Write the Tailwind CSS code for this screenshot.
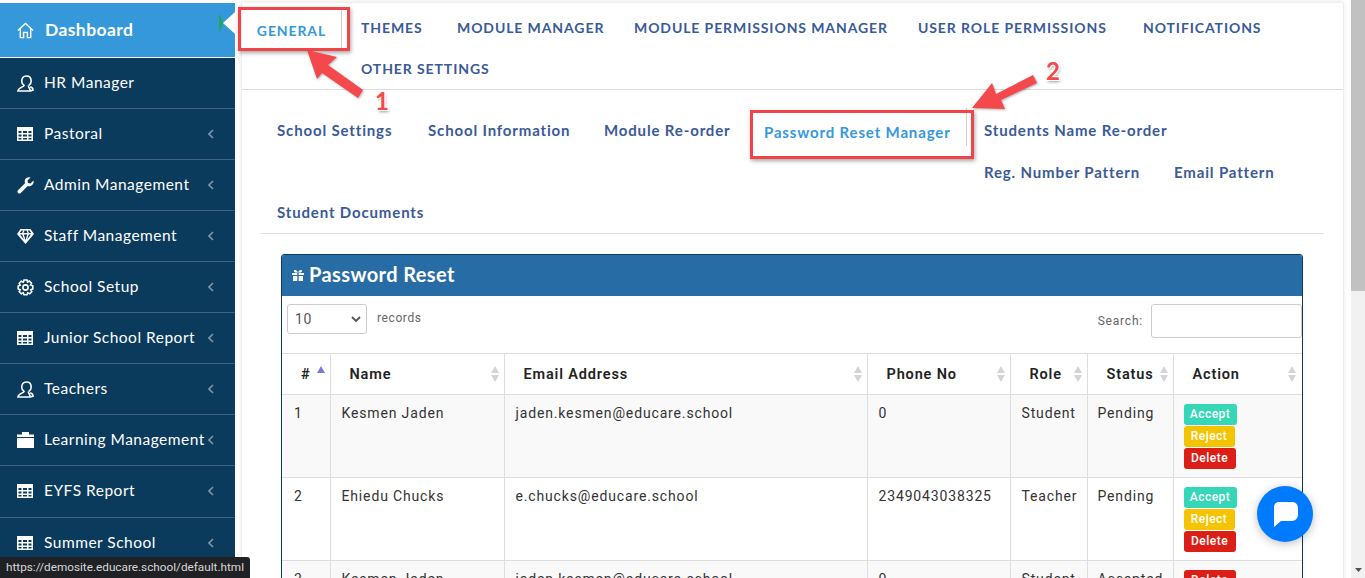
<!doctype html>
<html><head><meta charset="utf-8"><script src="https://cdn.jsdelivr.net/npm/@tailwindcss/browser@4"></script></head>
<body class="m-0 bg-white">
<div class="relative flex h-[578px] w-[1365px] overflow-hidden bg-white font-['Lato',sans-serif]">
  <aside class="flex h-full w-[235px] shrink-0 flex-col bg-white pt-[3px] text-white">
    <a class="flex h-[55px] shrink-0 items-center border-b border-white bg-[#3498db] pl-[17px] text-[17.500px] font-bold tracking-[0.4px]">
      <svg class="mr-[11px] h-[17px] w-[17px]" viewBox="0 0 18 18" fill="none" stroke="white" stroke-width="1.500"><path d="M1 9 9 1.500 17 9M3.500 7.500V16.500H7V11H11V16.500H14.500V7.500"/></svg>Dashboard
    </a>
    <div class="flex flex-1 flex-col bg-[#0a3a5c] text-[15.5px] tracking-[0.5px]">
      <a class="flex h-[51px] shrink-0 items-center border-b border-[#3f6380] pl-[17px]"><svg class="mr-[10px] h-[17px] w-[17px]" viewBox="0 0 18 18" fill="none" stroke="white" stroke-width="1.700"><path d="M5 6.500C5 3 7 1 10 1s5 2 5 5.500c0 2-1 3.500-2.500 4.500M5 6.500C5 8.500 6 10 7.500 11 7 13 1.500 13 1 17H14C14 14.500 12 13 12 11M14 12.500c1.500.5 3 1.500 3 3.500L14 17"/></svg>HR Manager</a>
      <a class="flex h-[51px] shrink-0 items-center border-b border-[#3f6380] pl-[17px]"><svg class="mr-[11px] h-[14px] w-[16px]" viewBox="0 0 16 14" fill="white"><path fill-rule="evenodd" d="M0 0H16V14H0ZM1.500 4V6H4.500V4ZM6 4V6H10V4ZM11.500 4V6H14.500V4ZM1.500 7.500V9.500H4.500V7.500ZM6 7.500V9.500H10V7.500ZM11.500 7.500V9.500H14.500V7.500ZM1.500 11V12.500H4.500V11ZM6 11V12.500H10V11ZM11.500 11V12.500H14.500V11Z"/></svg><span class="flex-1">Pastoral</span><svg class="mr-[21px] h-[10px] w-[6px]" viewBox="0 0 6 10" fill="none" stroke="#7f97ab" stroke-width="1.600"><path d="M5 1 1 5l4 4"/></svg></a>
      <a class="flex h-[51px] shrink-0 items-center border-b border-[#3f6380] pl-[17px]"><svg class="mr-[10px] h-[17px] w-[17px]" viewBox="0 0 17 17" fill="white"><path d="M16.500 3.500 13.500 6.500 11 6 10.500 3.500 13.500.5C11-.5 8 1 7.800 3.800 7.700 5 8 5.700 8 6.300L.8 13.500C-.5 15 2 17.500 3.500 16.200L10.700 9C13.500 10 17.500 7.500 16.500 3.500Z"/></svg><span class="flex-1">Admin Management</span><svg class="mr-[21px] h-[10px] w-[6px]" viewBox="0 0 6 10" fill="none" stroke="#7f97ab" stroke-width="1.600"><path d="M5 1 1 5l4 4"/></svg></a>
      <a class="flex h-[51px] shrink-0 items-center border-b border-[#3f6380] pl-[17px]"><svg class="mr-[10px] h-[15px] w-[17px]" viewBox="0 0 17 15" fill="white"><path fill-rule="evenodd" d="M3.500 0H13.500L17 5 8.500 15 0 5ZM4.500 1.500 2.800 4H5L6.200 1.500ZM7.500 1.500 6.500 4H10.500L9.500 1.500ZM10.800 1.500 12 4H14.200L12.500 1.500ZM3 5.500 7 10.500 5.200 5.500ZM6.800 5.500 8.500 11 10.200 5.500ZM11.800 5.500 10 10.500 14 5.500Z"/></svg><span class="flex-1">Staff Management</span><svg class="mr-[21px] h-[10px] w-[6px]" viewBox="0 0 6 10" fill="none" stroke="#7f97ab" stroke-width="1.600"><path d="M5 1 1 5l4 4"/></svg></a>
      <a class="flex h-[51px] shrink-0 items-center border-b border-[#3f6380] pl-[17px]"><svg class="mr-[10px] h-[17px] w-[17px]" viewBox="0 0 17 17" fill="none" stroke="white" stroke-width="1.600"><circle cx="8.500" cy="8.500" r="2.600"/><path d="M7 1H10L10.500 3 12.300 2 14.500 4.200 13.500 6 15.800 6.800V10L13.800 10.700 14.800 12.700 12.700 14.800 10.700 13.800 10 15.800H7L6.300 13.800 4.300 14.800 2.200 12.700 3.200 10.700 1.200 10V7L3.200 6.300 2.200 4.300 4.300 2.200 6.300 3.200Z"/></svg><span class="flex-1">School Setup</span><svg class="mr-[21px] h-[10px] w-[6px]" viewBox="0 0 6 10" fill="none" stroke="#7f97ab" stroke-width="1.600"><path d="M5 1 1 5l4 4"/></svg></a>
      <a class="flex h-[51px] shrink-0 items-center border-b border-[#3f6380] pl-[17px]"><svg class="mr-[11px] h-[14px] w-[16px]" viewBox="0 0 16 14" fill="white"><path fill-rule="evenodd" d="M0 0H16V14H0ZM1.500 4V6H4.500V4ZM6 4V6H10V4ZM11.500 4V6H14.500V4ZM1.500 7.500V9.500H4.500V7.500ZM6 7.500V9.500H10V7.500ZM11.500 7.500V9.500H14.500V7.500ZM1.500 11V12.500H4.500V11ZM6 11V12.500H10V11ZM11.500 11V12.500H14.500V11Z"/></svg><span class="flex-1">Junior School Report</span><svg class="mr-[21px] h-[10px] w-[6px]" viewBox="0 0 6 10" fill="none" stroke="#7f97ab" stroke-width="1.600"><path d="M5 1 1 5l4 4"/></svg></a>
      <a class="flex h-[51px] shrink-0 items-center border-b border-[#3f6380] pl-[17px]"><svg class="mr-[10px] h-[17px] w-[17px]" viewBox="0 0 18 18" fill="none" stroke="white" stroke-width="1.700"><path d="M5 6.500C5 3 7 1 10 1s5 2 5 5.500c0 2-1 3.500-2.500 4.500M5 6.500C5 8.500 6 10 7.500 11 7 13 1.500 13 1 17H14C14 14.500 12 13 12 11M14 12.500c1.500.5 3 1.500 3 3.500L14 17"/></svg><span class="flex-1">Teachers</span><svg class="mr-[21px] h-[10px] w-[6px]" viewBox="0 0 6 10" fill="none" stroke="#7f97ab" stroke-width="1.600"><path d="M5 1 1 5l4 4"/></svg></a>
      <a class="flex h-[51px] shrink-0 items-center border-b border-[#3f6380] pl-[17px]"><svg class="mr-[10px] h-[16px] w-[17px]" viewBox="0 0 17 16" fill="white"><path d="M5 0H12V2.500H17V5H0V2.500H5ZM0 6H17V16H0Z"/></svg><span class="w-[164px] whitespace-nowrap">Learning Management</span><svg class="h-[10px] w-[6px]" viewBox="0 0 6 10" fill="none" stroke="#7f97ab" stroke-width="1.600"><path d="M5 1 1 5l4 4"/></svg></a>
      <a class="flex h-[52px] shrink-0 items-center border-b border-[#3f6380] pb-[2px] pl-[17px]"><svg class="mr-[11px] h-[14px] w-[16px]" viewBox="0 0 16 14" fill="white"><path fill-rule="evenodd" d="M0 0H16V14H0ZM1.500 4V6H4.500V4ZM6 4V6H10V4ZM11.500 4V6H14.500V4ZM1.500 7.500V9.500H4.500V7.500ZM6 7.500V9.500H10V7.500ZM11.500 7.500V9.500H14.500V7.500ZM1.500 11V12.500H4.500V11ZM6 11V12.500H10V11ZM11.500 11V12.500H14.500V11Z"/></svg><span class="flex-1">EYFS Report</span><svg class="mr-[21px] h-[10px] w-[6px]" viewBox="0 0 6 10" fill="none" stroke="#7f97ab" stroke-width="1.600"><path d="M5 1 1 5l4 4"/></svg></a>
      <a class="flex h-[51px] shrink-0 items-center pb-[2px] pl-[17px]"><svg class="mr-[11px] h-[14px] w-[16px]" viewBox="0 0 16 14" fill="white"><path fill-rule="evenodd" d="M0 0H16V14H0ZM1.500 4V6H4.500V4ZM6 4V6H10V4ZM11.500 4V6H14.500V4ZM1.500 7.500V9.500H4.500V7.500ZM6 7.500V9.500H10V7.500ZM11.500 7.500V9.500H14.500V7.500ZM1.500 11V12.500H4.500V11ZM6 11V12.500H10V11ZM11.500 11V12.500H14.500V11Z"/></svg><span class="flex-1">Summer School</span><svg class="mr-[21px] h-[10px] w-[6px]" viewBox="0 0 6 10" fill="none" stroke="#7f97ab" stroke-width="1.600"><path d="M5 1 1 5l4 4"/></svg></a>
    </div>
  </aside>

  <main class="h-full w-[1116px] shrink-0 pt-[3px] pl-[6px] pr-[7px]">
    <div class="h-[640px] border-x border-[#e8eef3] shadow-[0_-2px_4px_rgba(0,0,0,0.08)]">
      <div class="flex h-[87px] border-b border-[#dddddd] text-[14px] font-bold uppercase tracking-[0.9px] text-[#3a5a98]">
        <div class="mt-[5px] flex h-[42px] w-[100px] shrink-0 items-center justify-center border-r border-[#cfcfcf] pt-[2px] text-[#3498db]">General</div>
        <div class="flex flex-1 flex-wrap content-start pt-[14px] pl-[19px]">
          <a class="h-[20px] w-[96px] whitespace-nowrap">Themes</a>
          <a class="h-[20px] w-[177px] whitespace-nowrap">Module Manager</a>
          <a class="h-[20px] w-[284px] whitespace-nowrap">Module Permissions Manager</a>
          <a class="h-[20px] w-[225px] whitespace-nowrap">User Role Permissions</a>
          <a class="h-[20px] w-[140px] whitespace-nowrap">Notifications</a>
          <a class="mt-[21px] h-[20px] w-[200px] whitespace-nowrap">Other Settings</a>
        </div>
      </div>
      <div class="mx-[19px] flex h-[144px] flex-col border-b border-[#dddddd] text-[15px] font-bold tracking-[0.85px] text-[#3a5a98]">
        <div class="flex h-[60px] items-start pt-[29px] pl-[16px]">
          <a class="w-[151px] whitespace-nowrap">School Settings</a>
          <a class="w-[176px] whitespace-nowrap">School Information</a>
          <a class="w-[160px] whitespace-nowrap">Module Re-order</a>
          <a class="relative mt-[2px] w-[220px] whitespace-nowrap text-[#3498db]">Password Reset Manager<span class="absolute -top-[13px] right-[17px] h-[38px] w-px bg-[#cfcfcf]"></span></a>
          <a class="whitespace-nowrap">Students Name Re-order</a>
        </div>
        <div class="flex h-[41px] pt-[11px] pl-[723px]">
          <a class="w-[190px] whitespace-nowrap">Reg. Number Pattern</a>
          <a class="whitespace-nowrap">Email Pattern</a>
        </div>
        <div class="pt-[10px] pl-[16px]"><a class="whitespace-nowrap">Student Documents</a></div>
      </div>
      <section class="mr-[40px] ml-[39px] mt-[20px] overflow-hidden rounded-t-[3px] border border-[#0b3c5d] font-['Roboto',sans-serif]">
        <h2 class="flex h-[41px] items-center bg-[#286ca6] pb-[3px] pl-[10px] font-['Lato',sans-serif] text-[20px] font-bold tracking-[0.4px] text-white">
          <svg class="mr-[5px] mt-[3px] h-[11px] w-[12px]" viewBox="0 0 12 11" fill="white"><path d="M0 3H5.300V5H0ZM6.700 3H12V5H6.700ZM1 6H5.300V11H1ZM6.700 6H11V11H6.700ZM3 0C4.500 0 5.700 1.500 6 2.700 6.300 1.500 7.500 0 9 0 10.500 0 10.500 2.500 8 2.500H4C1.500 2.500 1.500 0 3 0Z"/></svg>Password Reset
        </h2>
        <div class="flex h-[57px] justify-between pt-[8px] text-[12px] tracking-[0.6px] text-[#666]">
          <div class="flex pl-[5px]">
            <div class="flex h-[30px] w-[80px] items-center justify-between rounded-[3px] border border-[#ccc] pl-[7px] pr-[5px] text-[14px] text-[#555]">10<svg class="h-[6px] w-[10px]" viewBox="0 0 10 6" fill="none" stroke="#555" stroke-width="1.800"><path d="M1 1 5 5 9 1"/></svg></div>
            <span class="ml-[10px] mt-[5px]">records</span>
          </div>
          <div class="flex">
            <span class="mr-[8px] mt-[8px] tracking-[0.8px]">Search:</span>
            <div class="h-[34px] w-[151px] rounded-[3px] border border-[#ccc]"></div>
          </div>
        </div>
        <table class="w-[1020px] table-fixed border-collapse text-left text-[14px] tracking-[0.85px] text-[#333]">
          <colgroup><col class="w-[48px]"><col class="w-[174px]"><col class="w-[363px]"><col class="w-[143px]"><col class="w-[77px]"><col class="w-[86px]"><col class="w-[129px]"></colgroup>
          <thead class="text-[14.5px] text-[#222]">
            <tr class="h-[41px] border-y border-[#ddd]">
              <th class="relative border-r border-[#ddd] pt-[2px] pl-[19px] font-semibold"># <svg class="absolute top-[12px] right-[5px] h-[7px] w-[8px]" viewBox="0 0 8 7" fill="#7a7add"><path d="M4 0 8 7H0Z"/></svg></th>
              <th class="relative border-r border-[#ddd] pt-[2px] pl-[19px] font-semibold">Name<svg class="absolute top-[12px] right-[5px] h-[16px] w-[8px]" viewBox="0 0 8 16" fill="#d4d4d4"><path d="M4 0 8 7H0ZM4 16 0 9H8Z"/></svg></th>
              <th class="relative border-r border-[#ddd] pt-[2px] pl-[19px] font-semibold">Email Address<svg class="absolute top-[12px] right-[5px] h-[16px] w-[8px]" viewBox="0 0 8 16" fill="#d4d4d4"><path d="M4 0 8 7H0ZM4 16 0 9H8Z"/></svg></th>
              <th class="relative border-r border-[#ddd] pt-[2px] pl-[19px] font-semibold">Phone No<svg class="absolute top-[12px] right-[5px] h-[16px] w-[8px]" viewBox="0 0 8 16" fill="#d4d4d4"><path d="M4 0 8 7H0ZM4 16 0 9H8Z"/></svg></th>
              <th class="relative border-r border-[#ddd] pt-[2px] pl-[19px] font-semibold">Role<svg class="absolute top-[12px] right-[5px] h-[16px] w-[8px]" viewBox="0 0 8 16" fill="#d4d4d4"><path d="M4 0 8 7H0ZM4 16 0 9H8Z"/></svg></th>
              <th class="relative border-r border-[#ddd] pt-[2px] pl-[19px] font-semibold">Status<svg class="absolute top-[12px] right-[5px] h-[16px] w-[8px]" viewBox="0 0 8 16" fill="#d4d4d4"><path d="M4 0 8 7H0ZM4 16 0 9H8Z"/></svg></th>
              <th class="relative pt-[2px] pl-[19px] font-semibold">Action<svg class="absolute top-[12px] right-[6px] h-[16px] w-[8px]" viewBox="0 0 8 16" fill="#d4d4d4"><path d="M4 0 8 7H0ZM4 16 0 9H8Z"/></svg></th>
            </tr>
          </thead>
          <tbody class="align-top">
            <tr class="h-[83px] border-b border-[#ddd] bg-[#f9f9f9]">
              <td class="border-r border-[#ddd] pt-[8px] pl-[12px]">1</td><td class="border-r border-[#ddd] pt-[8px] pl-[11px]">Kesmen Jaden</td><td class="border-r border-[#ddd] pt-[8px] pl-[11px]">jaden.kesmen@educare.school</td><td class="border-r border-[#ddd] pt-[8px] pl-[11px]">0</td><td class="border-r border-[#ddd] pt-[8px] pl-[11px]">Student</td><td class="border-r border-[#ddd] pt-[8px] pl-[10px]">Pending</td>
              <td class="pt-[9px] pl-[10px]"><div class="flex flex-col items-start gap-px text-[12px] font-medium leading-[21px] tracking-[0.5px] text-white"><span class="w-[53px] rounded-[3px] bg-[#36d7b7] text-center">Accept</span><span class="w-[51px] rounded-[3px] bg-[#f5c400] text-center">Reject</span><span class="w-[52px] rounded-[3px] bg-[#dc1f16] text-center">Delete</span></div></td>
            </tr>
            <tr class="h-[83px] border-b border-[#ddd]">
              <td class="border-r border-[#ddd] pt-[8px] pl-[12px]">2</td><td class="border-r border-[#ddd] pt-[8px] pl-[11px]">Ehiedu Chucks</td><td class="border-r border-[#ddd] pt-[8px] pl-[11px]">e.chucks@educare.school</td><td class="border-r border-[#ddd] pt-[8px] pl-[11px]">2349043038325</td><td class="border-r border-[#ddd] pt-[8px] pl-[11px]">Teacher</td><td class="border-r border-[#ddd] pt-[8px] pl-[10px]">Pending</td>
              <td class="pt-[9px] pl-[10px]"><div class="flex flex-col items-start gap-px text-[12px] font-medium leading-[21px] tracking-[0.5px] text-white"><span class="w-[53px] rounded-[3px] bg-[#36d7b7] text-center">Accept</span><span class="w-[51px] rounded-[3px] bg-[#f5c400] text-center">Reject</span><span class="w-[52px] rounded-[3px] bg-[#dc1f16] text-center">Delete</span></div></td>
            </tr>
            <tr class="h-[83px] bg-[#f9f9f9]">
              <td class="border-r border-[#ddd] pt-[8px] pl-[12px]">3</td><td class="border-r border-[#ddd] pt-[8px] pl-[11px]">Kesmen Jaden</td><td class="border-r border-[#ddd] pt-[8px] pl-[11px]">jaden.kesmen@educare.school</td><td class="border-r border-[#ddd] pt-[8px] pl-[11px]">0</td><td class="border-r border-[#ddd] pt-[8px] pl-[11px]">Student</td><td class="border-r border-[#ddd] pt-[8px] pl-[10px]">Accepted</td>
              <td class="pt-[9px] pl-[10px]"><div class="flex flex-col items-start text-[12px] font-medium leading-[21px] tracking-[0.5px] text-white"><span class="w-[52px] rounded-[3px] bg-[#dc1f16] text-center">Delete</span></div></td>
            </tr>
          </tbody>
        </table>
      </section>
    </div>
  </main>

  <div class="flex h-full w-[14px] shrink-0 flex-col items-center bg-[#f1f1f1]">
    <div class="h-[291px] w-full bg-[#c1c1c1]"></div>
    <svg class="mt-[277px] h-[4px] w-[7px]" viewBox="0 0 7 4" fill="#505050"><path d="M0 0H7L3.500 4Z"/></svg>
  </div>

  <!-- sidebar caret -->
  <svg class="absolute top-[12px] left-[219px] h-[22px] w-[16px]" viewBox="0 0 16 22"><path d="M16 0 4 11 16 22Z" fill="white"/><path d="M0 1 4 11 0 21Z" fill="#1fa855"/></svg>

  <!-- annotations -->
  <div class="absolute top-[7px] left-[238px] h-[44px] w-[112px] border-[3px] border-[#f0444a] shadow-[1px_2px_4px_rgba(0,0,0,0.35)]"></div>
  <div class="absolute top-[110px] left-[750px] h-[49px] w-[224px] border-[3px] border-[#f0444a] shadow-[1px_2px_4px_rgba(0,0,0,0.35)]"></div>
  <svg class="absolute top-0 left-0 h-[578px] w-[1365px] drop-shadow-[1px_1px_1px_rgba(0,0,0,0.3)]" viewBox="0 0 1365 578" fill="#f5484c">
    <path d="M307 50 337 57 328 65 363 90 358 98 322 73 317 79Z"/>
    <path d="M972 108 992 83 996 94 1033 75 1037 83 1001 100 1005 109Z"/>
  </svg>
  <span class="absolute top-[87px] left-[375px] text-[24px] font-bold leading-[28px] text-[#f5484c] [text-shadow:-1px_-1px_0_#fff,1px_-1px_0_#fff,-1px_1px_0_#fff,1px_1px_0_#fff,1px_2px_3px_rgba(0,0,0,0.4)]">1</span>
  <span class="absolute top-[57px] left-[1046px] text-[24px] font-bold leading-[28px] text-[#f5484c] [text-shadow:-1px_-1px_0_#fff,1px_-1px_0_#fff,-1px_1px_0_#fff,1px_1px_0_#fff,1px_2px_3px_rgba(0,0,0,0.4)]">2</span>

  <!-- chat button -->
  <div class="absolute top-[486px] left-[1257px] flex h-[56px] w-[56px] items-center justify-center rounded-full bg-[#007bff] shadow-[0_2px_10px_rgba(0,0,0,0.25)]">
    <svg class="h-[25px] w-[25px]" viewBox="0 0 25 25" fill="white"><path d="M6 0H19C22 0 25 2 25 6V13C25 16 22 19 19 19H8L1 25V6C1 2 3 0 6 0Z"/></svg>
  </div>

  <!-- status tooltip -->
  <div class="absolute bottom-0 left-0 flex h-[21px] w-[250px] items-center rounded-tr-[3px] bg-[#202124] pl-[6px] font-['Roboto',sans-serif] text-[11.75px] text-[#d8d8d8]">https://demosite.educare.school/default.html</div>
</div>
</body></html>
